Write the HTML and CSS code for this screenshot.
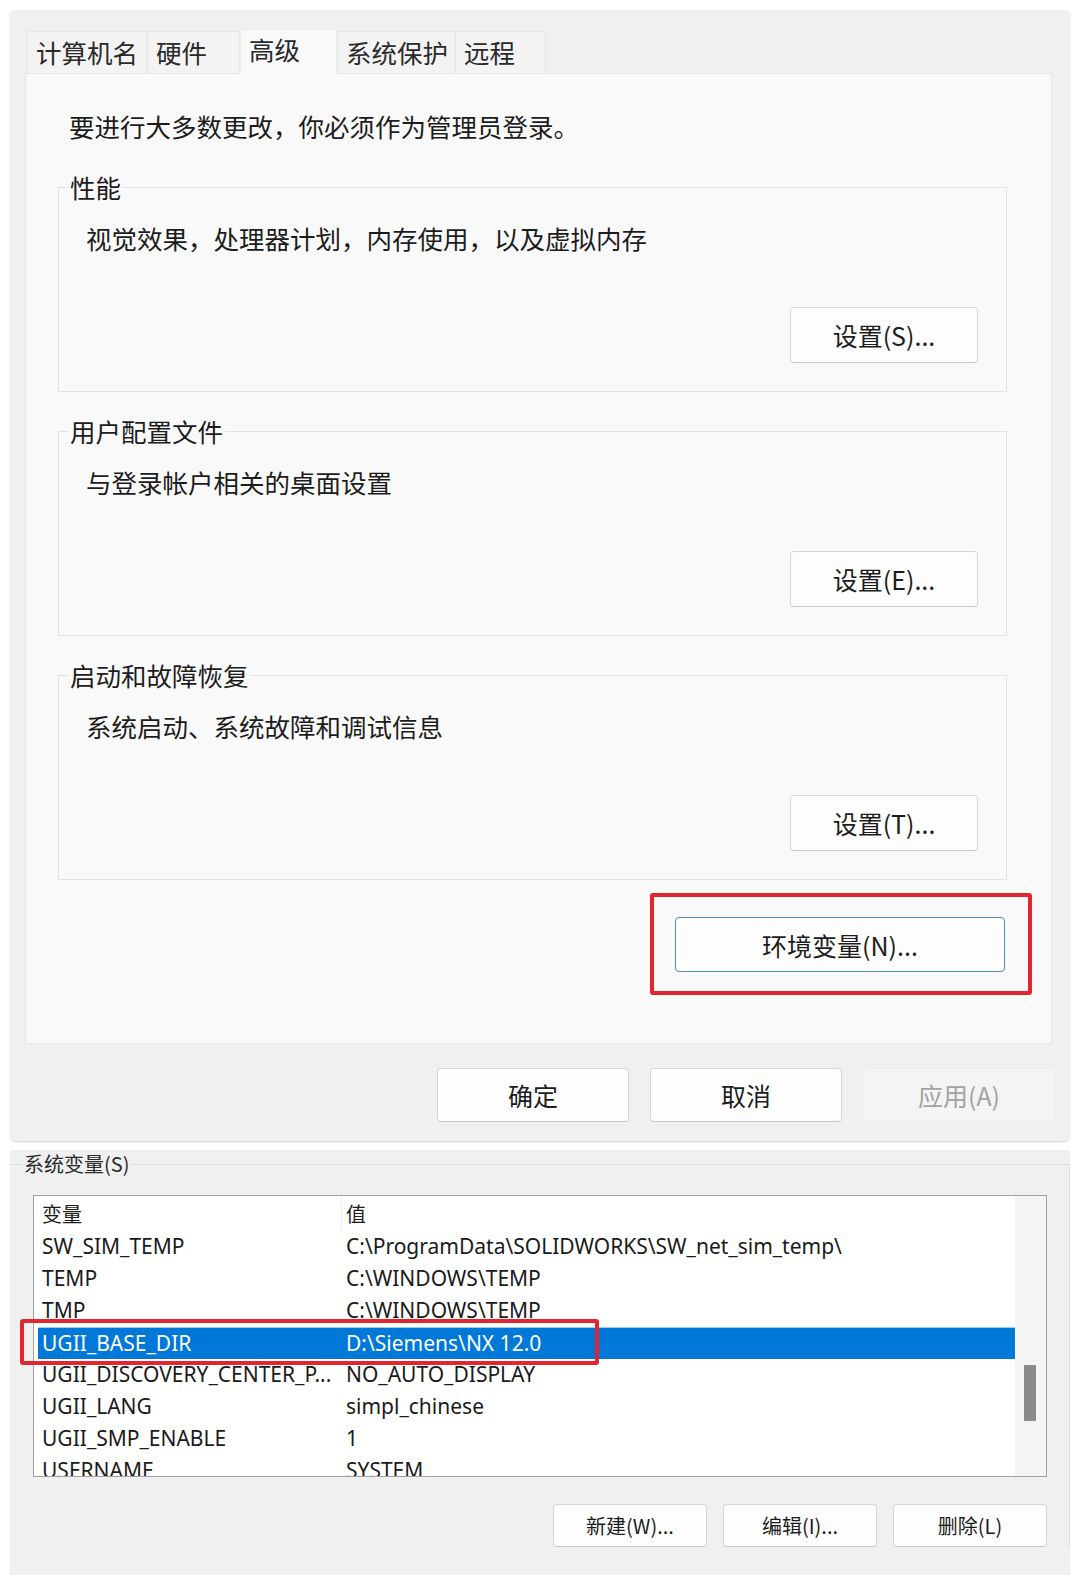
FILE: index.html
```html
<!DOCTYPE html>
<html lang="zh-CN">
<head>
    <meta charset="UTF-8">
    <meta name="viewport" content="width=device-width, initial-scale=1.0">
    <title>系统属性 - 高级</title>
    <link rel="stylesheet" href="styles.css">
</head>
<body>

<div class="dialog">
    <div class="tabs">
        <div class="tab tab-name">计算机名</div>
        <div class="tab tab-hw">硬件</div>
        <div class="tab tab-adv active">高级</div>
        <div class="tab tab-prot">系统保护</div>
        <div class="tab tab-remote">远程</div>
    </div>

    <div class="page">
        <p class="intro">要进行大多数更改，你必须作为管理员登录。</p>

        <fieldset class="group">
            <legend>性能</legend>
            <p class="group-desc">视觉效果，处理器计划，内存使用，以及虚拟内存</p>
            <div class="group-actions"><button class="btn btn-set">设置(S)...</button></div>
        </fieldset>

        <fieldset class="group">
            <legend>用户配置文件</legend>
            <p class="group-desc">与登录帐户相关的桌面设置</p>
            <div class="group-actions"><button class="btn btn-set">设置(E)...</button></div>
        </fieldset>

        <fieldset class="group">
            <legend>启动和故障恢复</legend>
            <p class="group-desc">系统启动、系统故障和调试信息</p>
            <div class="group-actions"><button class="btn btn-set">设置(T)...</button></div>
        </fieldset>

        <div class="mark mark-env">
            <button class="btn btn-env">环境变量(N)...</button>
        </div>
    </div>

    <div class="dialog-footer">
        <button class="btn btn-footer">确定</button>
        <button class="btn btn-footer">取消</button>
        <button class="btn btn-footer" disabled>应用(A)</button>
    </div>
</div>

<div class="sysvars">
    <fieldset class="sysvars-group">
        <legend>系统变量(S)</legend>

        <div class="listbox">
            <div class="list-body">
                <div class="list-head">
                    <span class="col col-name">变量</span>
                    <span class="col col-value">值</span>
                </div>
                <div class="list-row"><span class="col col-name">SW_SIM_TEMP</span><span class="col col-value">C:\ProgramData\SOLIDWORKS\SW_net_sim_temp\</span></div>
                <div class="list-row"><span class="col col-name">TEMP</span><span class="col col-value">C:\WINDOWS\TEMP</span></div>
                <div class="list-row"><span class="col col-name">TMP</span><span class="col col-value">C:\WINDOWS\TEMP</span></div>
                <div class="list-row selected"><span class="col col-name">UGII_BASE_DIR</span><span class="col col-value">D:\Siemens\NX 12.0</span></div>
                <div class="list-row"><span class="col col-name">UGII_DISCOVERY_CENTER_P...</span><span class="col col-value">NO_AUTO_DISPLAY</span></div>
                <div class="list-row"><span class="col col-name">UGII_LANG</span><span class="col col-value">simpl_chinese</span></div>
                <div class="list-row"><span class="col col-name">UGII_SMP_ENABLE</span><span class="col col-value">1</span></div>
                <div class="list-row"><span class="col col-name">USERNAME</span><span class="col col-value">SYSTEM</span></div>
            </div>
            <div class="scrollbar"><div class="thumb"></div></div>

            <!-- red annotation round the selected row -->
            <div class="mark mark-row"></div>
        </div>

        <div class="list-actions">
            <button class="btn btn-small">新建(W)...</button>
            <button class="btn btn-small">编辑(I)...</button>
            <button class="btn btn-small">删除(L)</button>
        </div>
    </fieldset>
</div>

</body>
</html>
```

FILE: styles.css
```css
body {
    margin: 0;
    background: #fff;
    font-family: "Noto Sans CJK SC", "Noto Sans", sans-serif;
    color: #1c1c1c;
}

p { margin: 0; }

/* --- upper dialog: 系统属性 / 高级 --- */
.dialog {
    margin: 10px 10px 0;
    height: 1131px;
    box-sizing: border-box;
    padding-top: 19px;
    background: #f0f0f0;
    border-radius: 4px 4px 6px 6px;
    box-shadow: 0 1px 2px rgba(0, 0, 0, 0.18);
    display: flex;
    flex-direction: column;
}

.tabs {
    display: flex;
    align-items: flex-end;
    padding-left: 17px;
    height: 44px;
}

.tab {
    height: 42px;
    box-sizing: border-box;
    padding-left: 8px;
    background: #f3f3f3;
    border: 1px solid #e7e7e7;
    border-bottom: none;
    font-size: 25.5px;
    line-height: 40px;
    color: #2a2a2a;
}

.tab-name { width: 120px; }
.tab-hw { width: 93px; }
.tab-adv { width: 97px; }
.tab-prot { width: 118px; }
.tab-remote { width: 91px; }

.tab.active {
    height: 45px;
    margin-bottom: -1px;
    background: #f9f9f9;
    border-color: #ececec;
    line-height: 38px;
    position: relative;
    z-index: 1;
}

.page {
    margin: 0 18px 0 15px;
    height: 971px;
    box-sizing: border-box;
    padding-top: 35px;
    background: #f9f9f9;
    border: 1px solid #e6e6e6;
    display: flex;
    flex-direction: column;
}

.intro {
    margin-left: 43px;
    font-size: 25.5px;
    line-height: 34px;
}

.group {
    margin: 27px 44px 0 32px;
    padding: 0 0 28px;
    min-width: 0;
    border: 1px solid #e2e2e2;
}

.group + .group { margin-top: 22px; }

.group legend {
    margin-left: 9px;
    padding: 0 2px;
    font-size: 25.5px;
    line-height: 34px;
}

.group-desc {
    margin: 17px 0 0 27px;
    font-size: 25.5px;
    line-height: 34px;
}

.group-actions {
    display: flex;
    justify-content: flex-end;
    margin-top: 52px;
    padding-right: 28px;
}

.btn {
    font-family: inherit;
    color: #1c1c1c;
    background: #fdfdfd;
    border: 1px solid #d6d6d6;
    border-bottom-color: #c6c6c6;
    border-radius: 4px;
    padding: 0;
    cursor: pointer;
}

.btn-set {
    width: 188px;
    height: 56px;
    font-size: 25px;
}

.mark {
    border: 4px solid #e2252f;
    border-radius: 3px;
}

.mark-env {
    align-self: flex-end;
    margin: 13px 19px 0 0;
    padding: 20px 23px 19px 21px;
}

.btn-env {
    display: block;
    width: 330px;
    height: 55px;
    font-size: 25px;
    border-color: #4f8bc4;
}

.dialog-footer {
    display: flex;
    justify-content: flex-end;
    gap: 21px;
    padding: 24px 15px 0 0;
}

.btn-footer {
    width: 192px;
    height: 54px;
    font-size: 25px;
}

.btn-footer:disabled {
    background: #f4f4f4;
    border-color: #efefef;
    color: #a3a3a3;
    cursor: default;
}

/* --- lower window: 系统变量 --- */
.sysvars {
    margin: 9px 10px 0;
    height: 425px;
    background: #f0f0f0;
}

.sysvars-group {
    margin: 0;
    padding: 0 22px 0 23px;
    min-width: 0;
    border: 1px solid #dedede;
    border-left: none;
    border-bottom: none;
}

.sysvars-group legend {
    margin-left: -11px;
    padding: 0 2px;
    font-size: 20px;
    line-height: 28px;
    color: #2a2a2a;
}

.listbox {
    position: relative;
    margin-top: 17px;
    height: 282px;
    box-sizing: border-box;
    border: 1px solid #a2a2a2;
    background: #fff;
    display: flex;
}

.list-body {
    flex: 1;
    overflow: hidden;
    padding-left: 4px;
}

.list-head {
    display: flex;
    height: 35px;
    font-size: 20px;
    line-height: 35px;
}

.list-head .col-name { border-right: 1px solid #ececec; }

.col {
    white-space: nowrap;
    padding-left: 4px;
}

.col-name {
    width: 299px;
    flex-shrink: 0;
}

.list-row {
    display: flex;
    height: 32px;
    box-sizing: border-box;
    font-family: "Noto Sans", sans-serif;
    font-size: 21px;
    line-height: 31px;
    color: #1a1a1a;
}

.list-row .col-value { padding-left: 5px; }

.list-row.selected {
    background: #0078d7;
    color: #fff;
    border-top: 1px solid #9fcdf2;
    line-height: 30px;
}

.scrollbar {
    width: 31px;
    flex-shrink: 0;
    background: #f4f4f4;
}

.thumb {
    margin: 169px 0 0 9px;
    width: 12px;
    height: 56px;
    background: #8a8a8a;
    border-radius: 1px;
}

.mark-row {
    position: absolute;
    left: -14px;
    top: 123px;
    width: 579px;
    height: 46px;
    box-sizing: border-box;
}

.list-actions {
    display: flex;
    justify-content: flex-end;
    gap: 16px;
    margin-top: 27px;
}

.btn-small {
    width: 154px;
    height: 43px;
    font-size: 20px;
}
```
